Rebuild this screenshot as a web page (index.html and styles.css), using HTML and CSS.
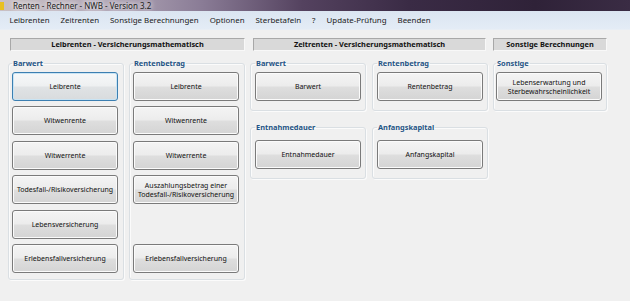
FILE: index.html
```html
<!DOCTYPE html>
<html lang="de">

<head>
    <meta charset="UTF-8">
    <meta name="viewport" content="width=device-width, initial-scale=1.0">
    <title>Renten - Rechner - NWB - Version 3.2</title>
    <link rel="stylesheet" href="styles.css">
</head>

<body>
    <div class="titlebar">
        <span class="app-icon"></span>
        <span class="title">Renten - Rechner - NWB - Version 3.2</span>
    </div>
    <nav class="menubar">
        <span class="menu-item">Leibrenten</span>
        <span class="menu-item">Zeitrenten</span>
        <span class="menu-item">Sonstige Berechnungen</span>
        <span class="menu-item">Optionen</span>
        <span class="menu-item">Sterbetafeln</span>
        <span class="menu-item">?</span>
        <span class="menu-item">Update-Prüfung</span>
        <span class="menu-item">Beenden</span>
    </nav>
    <main class="content">
        <section class="section leib">
            <div class="section-head">Leibrenten - Versicherungsmathematisch</div>
            <div class="groups">
                <fieldset class="group">
                    <legend>Barwert</legend>
                    <button class="btn focused">Leibrente</button>
                    <button class="btn">Witwenrente</button>
                    <button class="btn">Witwerrente</button>
                    <button class="btn">Todesfall-/Risikoversicherung</button>
                    <button class="btn">Lebensversicherung</button>
                    <button class="btn">Erlebensfallversicherung</button>
                </fieldset>
                <fieldset class="group">
                    <legend>Rentenbetrag</legend>
                    <button class="btn">Leibrente</button>
                    <button class="btn">Witwenrente</button>
                    <button class="btn">Witwerrente</button>
                    <button class="btn">Auszahlungsbetrag einer<br>Todesfall-/Risikoversicherung</button>
                    <div class="btn-space"></div>
                    <button class="btn">Erlebensfallversicherung</button>
                </fieldset>
            </div>
        </section>
        <section class="section zeit">
            <div class="section-head">Zeitrenten - Versicherungsmathematisch</div>
            <div class="groups">
                <fieldset class="group">
                    <legend>Barwert</legend>
                    <button class="btn">Barwert</button>
                </fieldset>
                <fieldset class="group">
                    <legend>Rentenbetrag</legend>
                    <button class="btn">Rentenbetrag</button>
                </fieldset>
            </div>
            <div class="groups second">
                <fieldset class="group">
                    <legend>Entnahmedauer</legend>
                    <button class="btn">Entnahmedauer</button>
                </fieldset>
                <fieldset class="group">
                    <legend>Anfangskapital</legend>
                    <button class="btn">Anfangskapital</button>
                </fieldset>
            </div>
        </section>
        <section class="section sonst">
            <div class="section-head">Sonstige Berechnungen</div>
            <div class="groups">
                <fieldset class="group">
                    <legend>Sonstige</legend>
                    <button class="btn">Lebenserwartung und<br>Sterbewahrscheinlichkeit</button>
                </fieldset>
            </div>
        </section>
    </main>
</body>

</html>
```

FILE: styles.css
```css
* {
    margin: 0;
    padding: 0;
    box-sizing: border-box;
}

body {
    width: 630px;
    height: 301px;
    overflow: hidden;
    background-color: #f0f0f0;
    font-family: "Noto Sans", "Open Sans", sans-serif;
    color: #000;
}

.titlebar {
    height: 11px;
    display: flex;
    align-items: center;
    background: linear-gradient(to right, #c9c0c4 0%, #b0a6b6 18%, #8a7c96 32%, #54425f 48%, #3a2b45 65%, #2f2238 85%, #3a2c44 100%);
}

.app-icon {
    width: 4px;
    height: 8px;
    background-color: #e8c020;
}

.title {
    margin-left: 9px;
    font-size: 8px;
    line-height: 11px;
    color: #222;
    text-shadow: 0 0 4px #fff, 0 0 6px #f2eef0;
}

.menubar {
    height: 19px;
    display: flex;
    align-items: center;
    padding-left: 4px;
    background: linear-gradient(#dbe5f1, #e4ecf6);
    border-bottom: 1px solid #e8eef5;
}

.menu-item {
    padding: 0 5.5px;
    font-size: 7.9px;
    color: #1b1b1b;
}

.content {
    display: flex;
    padding: 0 0 0 8px;
}

.section-head {
    height: 13px;
    margin-top: 8px;
    background-color: #d9d9d9;
    border: 1px solid;
    border-color: #a8a8a8 #f8f8f8 #f8f8f8 #a8a8a8;
    font-size: 7.4px;
    font-weight: bold;
    line-height: 11px;
    text-align: center;
    color: #111;
}

.leib {
    width: 238px;
}

.leib .section-head {
    margin-left: 2px;
    margin-right: 1px;
}

.zeit {
    width: 238px;
    margin-left: 4px;
}

.zeit .section-head {
    margin-left: 3px;
    margin-right: 2px;
}

.sonst {
    width: 114px;
    margin-left: 5px;
}

.groups {
    display: flex;
    gap: 5px;
    margin-top: 6px;
}

.zeit .groups {
    gap: 6px;
}

.groups.second {
    margin-top: 10px;
}

.group {
    width: 116px;
    border: 1px solid #dadfe3;
    border-radius: 3px;
    box-shadow: inset 1px 1px 0 #fbfbfb, 1px 1px 0 #fbfbfb;
    padding: 0 0 6px 3px;
    display: flex;
    flex-direction: column;
    gap: 5.4px;
}

.zeit .group {
    padding-left: 4px;
    padding-bottom: 9px;
}

.sonst .group {
    width: 114px;
    padding-left: 2px;
    padding-bottom: 9px;
}

.group legend {
    margin-left: 0;
    padding: 0 1px;
    font-size: 7.4px;
    font-weight: bold;
    line-height: 12px;
    color: #1f5485;
}

.group .btn:first-of-type {
    margin-top: 3px;
}

.groups.second .btn:first-of-type {
    margin-top: 7px;
}

.btn {
    width: 106px;
    height: 29px;
    border: 1px solid #7a7a7a;
    border-radius: 3px;
    background: linear-gradient(#f4f4f4 0%, #ececec 48%, #dedede 52%, #d4d4d4 100%);
    box-shadow: inset 0 0 0 1px #fbfbfb;
    font-family: "Noto Sans", "Open Sans", sans-serif;
    font-size: 7px;
    line-height: 9px;
    color: #111;
    text-align: center;
}

.btn.focused {
    border-color: #3c7fb1;
    box-shadow: inset 0 0 0 1px #c9e4f4;
    background: linear-gradient(#f6f8f9 0%, #eef0f1 48%, #e0e3e5 52%, #d8dbdd 100%);
}

.btn-space {
    height: 29px;
}
```
